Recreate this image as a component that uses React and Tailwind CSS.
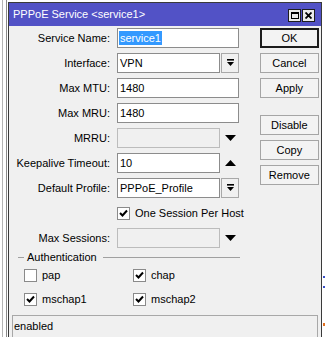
import React from 'react';

const DropIcon = () => (
  <svg width="9" height="8" viewBox="0 0 9 8">
    <rect x="1" y="0" width="7" height="1.6" fill="#000" />
    <path d="M1 3h7L4.5 7z" fill="#000" />
  </svg>
);

const TriDown = () => (
  <svg width="11" height="6" viewBox="0 0 11 6">
    <path d="M0 0h11L5.5 6z" fill="#000" />
  </svg>
);

const TriUp = () => (
  <svg width="11" height="6" viewBox="0 0 11 6">
    <path d="M0 6h11L5.5 0z" fill="#000" />
  </svg>
);

const Check = ({ checked }) => (
  <div className="w-[13px] h-[13px] bg-white border border-[#8a8a8a] flex items-center justify-center">
    {checked && (
      <svg width="9" height="8" viewBox="0 0 9 8">
        <path d="M1 4l2.5 2.5L8 1.5" stroke="#000" strokeWidth="2" fill="none" />
      </svg>
    )}
  </div>
);

const Row = ({ label, children }) => (
  <div className="flex items-center h-[20px]">
    <div className="w-[101px] text-right whitespace-nowrap">{label}</div>
    <div className="ml-[7px] flex items-center">{children}</div>
  </div>
);

const TextBox = ({ value, wide = true }) => (
  <div
    className={`${wide ? 'w-[122px]' : 'w-[103px]'} h-[20px] bg-white border border-[#8c8c8c] flex items-center pl-[2px]`}
  >
    {value}
  </div>
);

const Disabled = () => (
  <div className="w-[103px] h-[20px] bg-[#f0f0f0] border border-[#bcbcbc]" />
);

const DropBtn = () => (
  <div className="ml-[1px] w-[18px] h-[20px] bg-[#f0f0f0] border border-[#a8a8a8] flex items-center justify-center">
    <DropIcon />
  </div>
);

const Btn = ({ label, main }) => (
  <div
    className={`w-[59px] h-[20px] flex items-center justify-center bg-[#f3f3f3] ${
      main ? 'border-2 border-[#1c1c1c]' : 'border border-[#a5a5a5]'
    }`}
  >
    {label}
  </div>
);

export default function App() {
  return (
    <div
      className="w-[325px] h-[337px] bg-white flex overflow-hidden text-[11px] text-black"
      style={{ fontFamily: '"Liberation Sans", Arial, sans-serif' }}
    >
      {/* window behind the dialog */}
      <div className="w-[8px] h-full flex">
        <div className="ml-[2px] w-px h-full bg-[#b4b4b4]" />
        <div className="ml-[3px] w-px h-full bg-[#8a8a8a]" />
      </div>

      <div className="w-[314px] mt-[2px] flex flex-col border border-b-0 border-[#3a3a3a] bg-[#f0f0f0]">
        {/* title bar */}
        <div className="h-[23px] bg-[#5252c6] flex items-center justify-between pl-[4px] pr-[6px]">
          <span className="text-white text-[11px]">PPPoE Service &lt;service1&gt;</span>
          <div className="flex gap-[1px] mt-[1px]">
            <div className="w-[13px] h-[13px] bg-[#ececec] border border-[#1e1e1e] flex items-center justify-center">
              <div className="w-[8px] h-[7px] border border-black border-t-2" />
            </div>
            <div className="w-[13px] h-[13px] bg-[#ececec] border border-[#1e1e1e] flex items-center justify-center">
              <svg width="7" height="7" viewBox="0 0 7 7">
                <path d="M0.5 0.5l6 6M6.5 0.5l-6 6" stroke="#000" strokeWidth="1.8" />
              </svg>
            </div>
          </div>
        </div>

        <div className="flex flex-1 pt-[2px]">
          {/* form */}
          <div className="flex flex-col">
            <div className="flex flex-col gap-[5px]">
              <Row label="Service Name:">
                <div className="w-[122px] h-[20px] bg-white border border-[#8c8c8c] flex items-center pl-[1px]">
                  <span className="bg-[#3399ff] text-white leading-[14px] px-[1px]">service1</span>
                </div>
              </Row>
              <Row label="Interface:">
                <TextBox value="VPN" wide={false} />
                <DropBtn />
              </Row>
              <Row label="Max MTU:">
                <TextBox value="1480" />
              </Row>
              <Row label="Max MRU:">
                <TextBox value="1480" />
              </Row>
              <Row label="MRRU:">
                <Disabled />
                <div className="ml-[5px]">
                  <TriDown />
                </div>
              </Row>
              <Row label="Keepalive Timeout:">
                <TextBox value="10" wide={false} />
                <div className="ml-[5px]">
                  <TriUp />
                </div>
              </Row>
              <Row label="Default Profile:">
                <TextBox value="PPPoE_Profile" wide={false} />
                <DropBtn />
              </Row>
              <Row label="">
                <Check checked />
                <span className="ml-[5px]">One Session Per Host</span>
              </Row>
              <Row label="Max Sessions:">
                <Disabled />
                <div className="ml-[5px]">
                  <TriDown />
                </div>
              </Row>
            </div>

            {/* authentication group */}
            <div className="mt-[3px] ml-[9px] w-[222px] h-[12px] flex items-center">
              <div className="w-[6px] h-px bg-[#a0a0a0]" />
              <span className="ml-[3px]">Authentication</span>
              <div className="ml-[6px] flex-1 h-px bg-[#a0a0a0]" />
            </div>
            <div className="mt-[2px] ml-[15px] grid grid-cols-[109px_100px] gap-y-[4px]">
              <div className="flex items-center h-[20px]">
                <Check />
                <span className="ml-[5px]">pap</span>
              </div>
              <div className="flex items-center h-[20px]">
                <Check checked />
                <span className="ml-[5px]">chap</span>
              </div>
              <div className="flex items-center h-[20px]">
                <Check checked />
                <span className="ml-[5px]">mschap1</span>
              </div>
              <div className="flex items-center h-[20px]">
                <Check checked />
                <span className="ml-[5px]">mschap2</span>
              </div>
            </div>
          </div>

          {/* buttons */}
          <div className="ml-[16px] flex flex-col">
            <div className="flex flex-col gap-[5px]">
              <Btn label="OK" main />
              <Btn label="Cancel" />
              <Btn label="Apply" />
            </div>
            <div className="mt-[17px] flex flex-col gap-[5px]">
              <Btn label="Disable" />
              <Btn label="Copy" />
              <Btn label="Remove" />
            </div>
          </div>
        </div>

        {/* status bar */}
        <div className="mx-[3px] h-[22px] border border-b-0 border-[#a8a8a8] flex items-center pl-[1px]">
          enabled
        </div>
      </div>

      <div className="w-[3px] h-full flex flex-col">
        <div className="mt-[276px] ml-[1px] w-[2px] h-[2px] bg-[#3a50c8]" />
        <div className="mt-[8px] ml-[1px] w-[2px] h-[2px] bg-[#3a50c8]" />
        <div className="mt-[35px] ml-[1px] w-[2px] h-[3px] bg-[#e07020]" />
      </div>
    </div>
  );
}
